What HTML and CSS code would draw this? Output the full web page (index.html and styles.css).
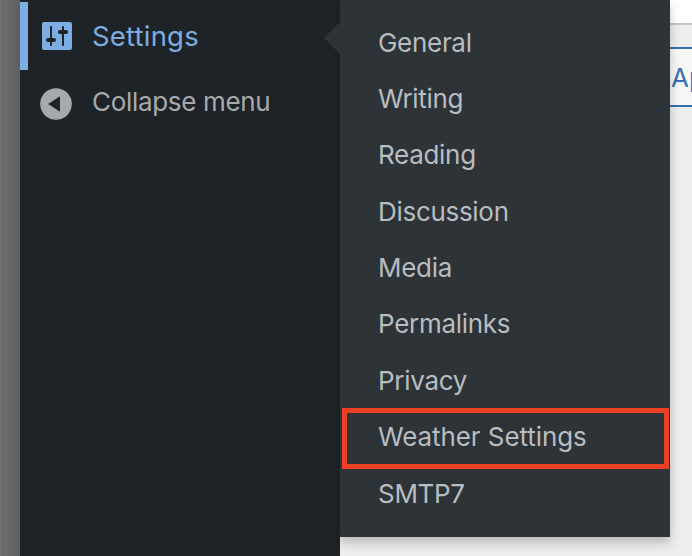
FILE: index.html
```html
<!DOCTYPE html>
<html lang="en">
<head>
<meta charset="utf-8">
<title>Settings menu</title>
<link rel="stylesheet" href="styles.css">
</head>
<body>
<div class="screen">
  <div class="backdrop"></div>
  <nav class="sidebar">
    <a class="side-item active">
      <svg class="icon" viewBox="0 0 36 36" width="36" height="36">
        <rect x="4" y="4" width="30" height="28" rx="2" fill="#7eade3"/>
        <path d="M13 9v18M25 9v18" stroke="#1d2327" stroke-width="2" stroke-linecap="round"/>
        <rect x="8" y="20" width="10" height="4" rx="2" fill="#1d2327"/>
        <rect x="20" y="12" width="10" height="4" rx="2" fill="#1d2327"/>
      </svg>
      <span class="label">Settings</span>
    </a>
    <a class="side-item collapse">
      <svg class="icon" viewBox="0 0 36 36" width="36" height="36">
        <circle cx="18" cy="18" r="15.8" fill="#a7aaad"/>
        <path d="M10.2 18L22 10.2v15.6z" fill="#1d2327"/>
      </svg>
      <span class="label">Collapse menu</span>
    </a>
  </nav>
  <main class="content">
    <div class="panel"></div>
    <div class="apply"><span>Apply</span></div>
    <ul class="submenu">
      <li>General</li>
      <li>Writing</li>
      <li>Reading</li>
      <li>Discussion</li>
      <li>Media</li>
      <li>Permalinks</li>
      <li>Privacy</li>
      <li class="marked">Weather Settings</li>
      <li>SMTP7</li>
    </ul>
  </main>
</div>
</body>
</html>
```
FILE: styles.css
```css
*, *::before, *::after { box-sizing: border-box; }
body {
  margin: 0;
  font-family: Inter, "Liberation Sans", sans-serif;
  font-size: 26px;
  overflow: hidden;
}
.screen {
  display: grid;
  grid-template-columns: 20px 320px minmax(0, 1fr);
  height: 556px;
  overflow: hidden;
}
.backdrop {
  background: linear-gradient(90deg, #747474 0, #747474 1px, #6b6b6b 1px, #696969 8px, #5e5e5e 20px);
}
.sidebar {
  background: #1d2327;
  padding-top: 2px;
}
.side-item {
  display: flex;
  align-items: center;
  gap: 18px;
  height: 68px;
  padding-left: 18px;
  color: #a7aaad;
  white-space: nowrap;
}
.icon { flex: none; }
.active {
  color: #7eade3;
  border-left: 8px solid #7eade3;
  padding-left: 10px;
  font-size: 27.5px;
  letter-spacing: .2px;
}
.collapse { letter-spacing: -.32px; }
.collapse .label { padding-bottom: 5px; }
.content {
  position: relative;
  background: #eeeeee;
}
.panel {
  height: 25px;
  background: #fff;
  border-bottom: 2px solid #c3c4c7;
}
.apply {
  display: flex;
  align-items: center;
  height: 60px;
  margin-top: 22px;
  padding-left: 331px;
  overflow: hidden;
  border: 2px solid #356fb0;
  border-width: 2px 0;
  background: #f6f7f7;
  color: #356fb0;
}
.submenu {
  position: absolute;
  left: 0;
  top: 0;
  width: 330px;
  height: 537px;
  margin: 0;
  padding: 14px 0 0;
  list-style: none;
  background: #2d3337;
  color: #b8bdc1;
  letter-spacing: -.3px;
  box-shadow: 0 6px 10px rgba(0, 0, 0, .22);
}
.submenu::before {
  content: "";
  position: absolute;
  left: -16px;
  top: 22px;
  border: 16px solid transparent;
  border-left-width: 0;
  border-right-color: #2d3337;
}
.submenu li {
  position: relative;
  display: flex;
  align-items: center;
  height: 56.35px;
  padding-left: 38px;
  white-space: nowrap;
}
.submenu li:last-child { padding-top: 2px; }
.submenu .marked { letter-spacing: -.08px; }
.marked::after {
  content: "";
  position: absolute;
  left: 2px;
  top: -.45px;
  width: 327px;
  height: 61px;
  border: 5px solid #eb4025;
}
```
